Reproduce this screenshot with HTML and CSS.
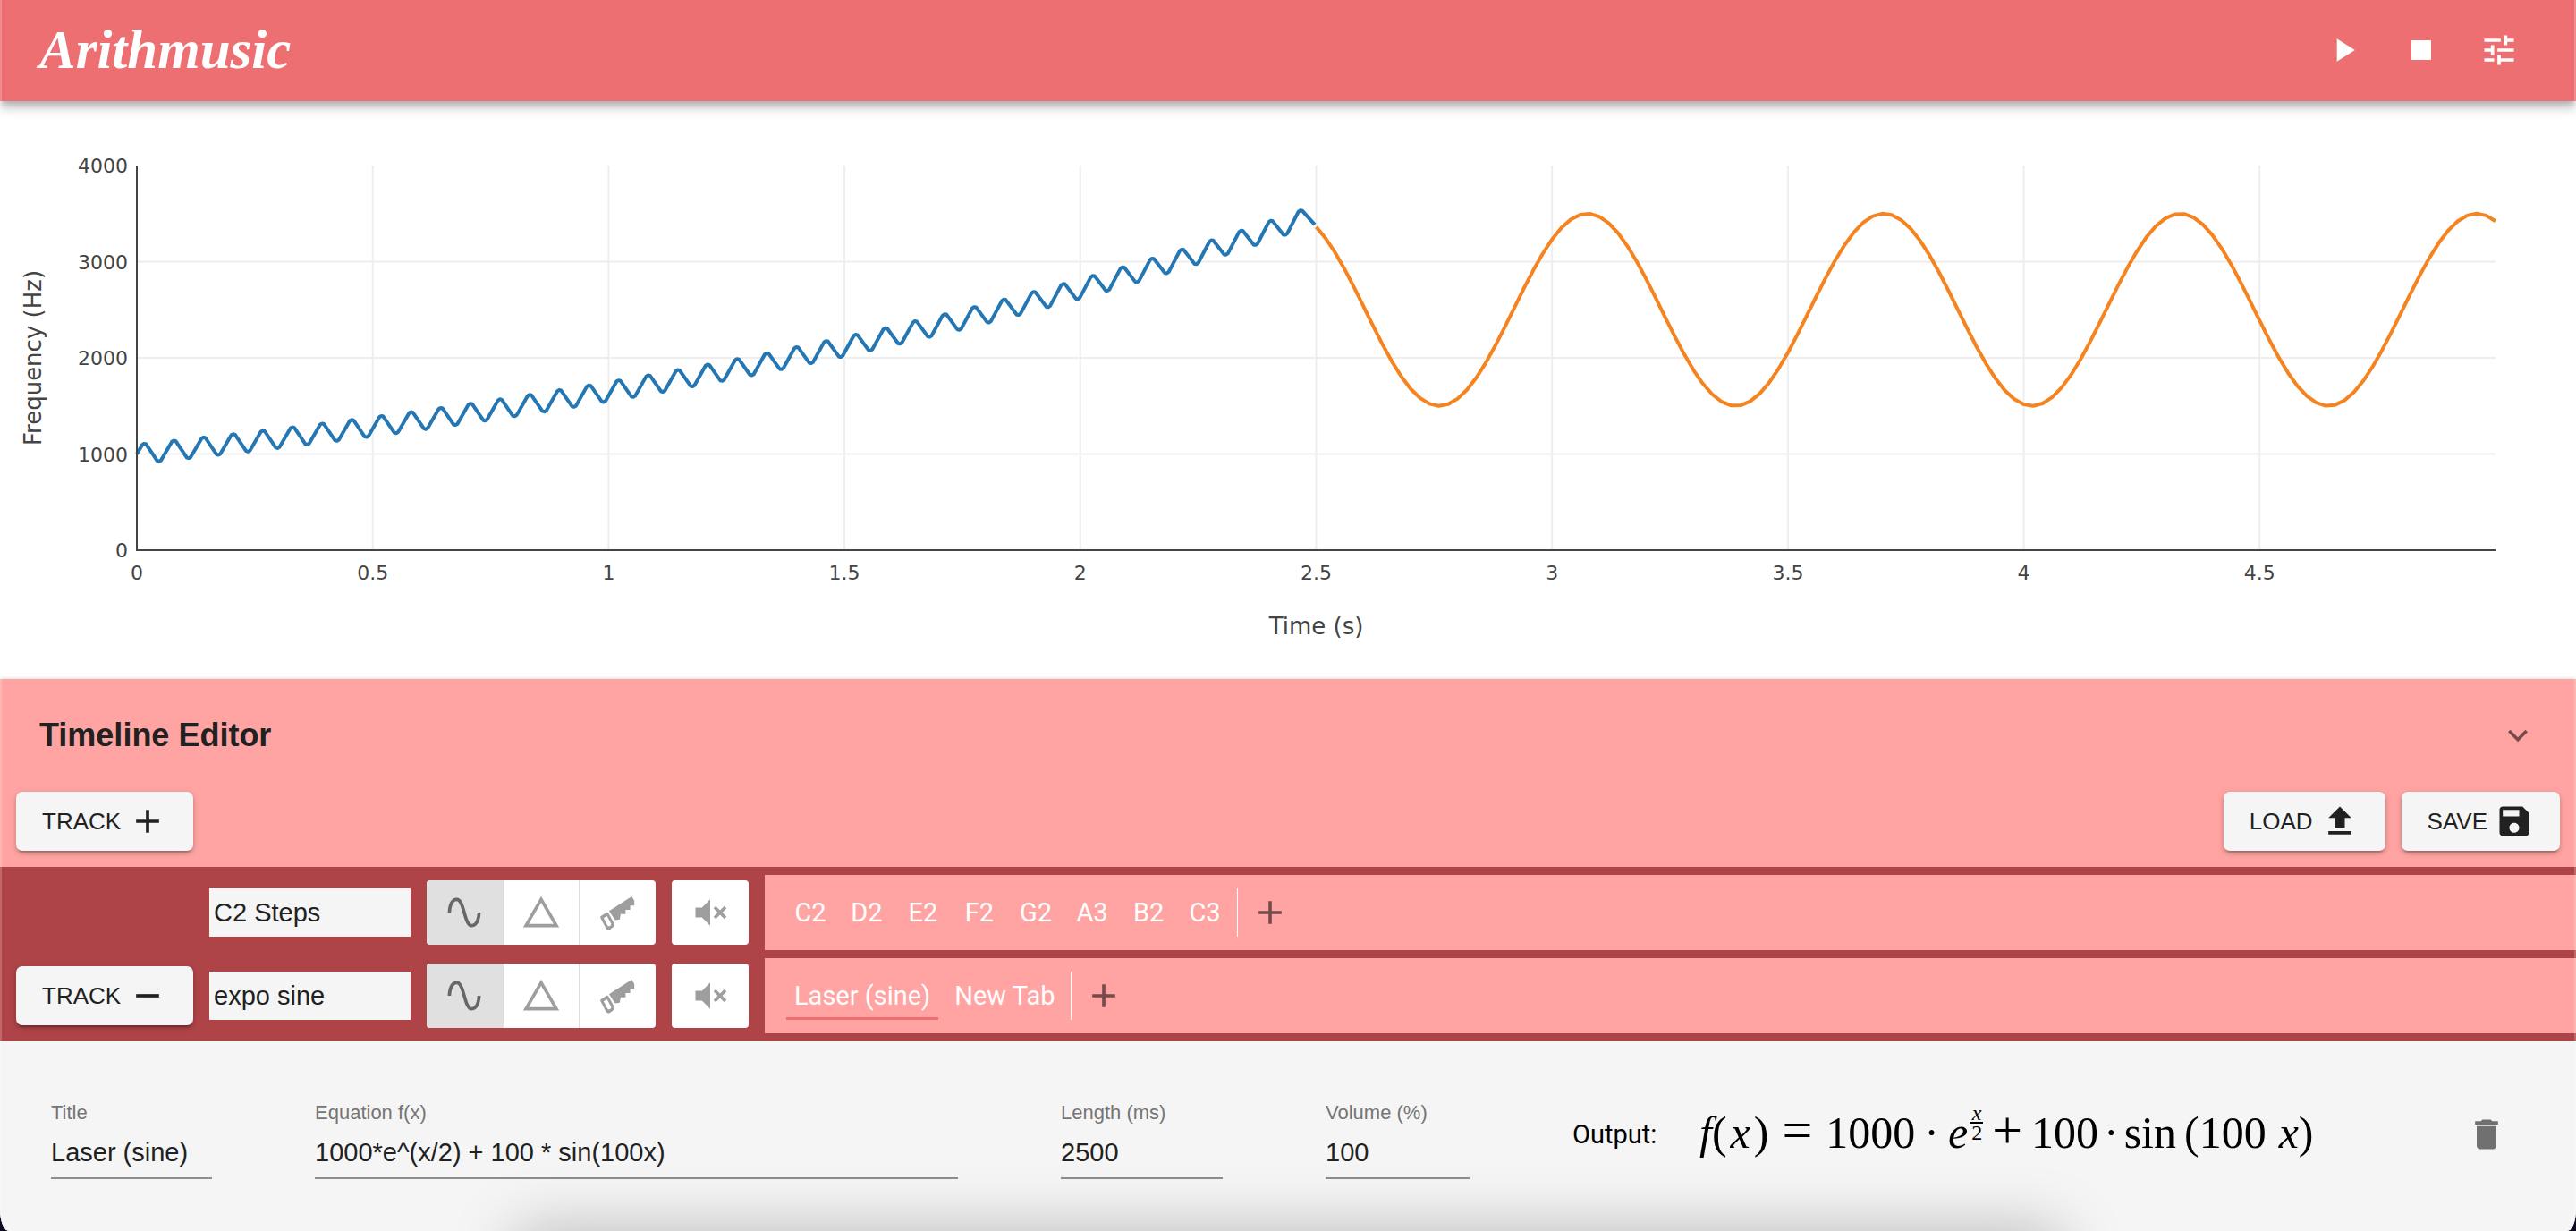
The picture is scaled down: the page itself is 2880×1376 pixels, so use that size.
FILE: index.html
```html
<!DOCTYPE html>
<html lang="en">
<head>
    <meta charset="utf-8" />
    <title>Arithmusic</title>
    <meta name="viewport" content="width=device-width, initial-scale=1">
    <link rel="stylesheet" href="styles.css">
</head>

<body>

<svg class="sprite" aria-hidden="true">
    <symbol id="i-play" viewBox="0 0 24 24"><path d="M8 5v14l11-7z"/></symbol>
    <symbol id="i-stop" viewBox="0 0 24 24"><path d="M6 6h12v12H6z"/></symbol>
    <symbol id="i-tune" viewBox="0 0 24 24"><path d="M3 17v2h6v-2H3zM3 5v2h10V5H3zm10 16v-2h8v-2h-8v-2h-2v6h2zM7 9v2H3v2h4v2h2V9H7zm14 4v-2H11v2h10zm-6-4h2V7h4V5h-4V3h-2v6z"/></symbol>
    <symbol id="i-more" viewBox="0 0 24 24"><path d="M16.59 8.59L12 13.17 7.41 8.59 6 10l6 6 6-6z"/></symbol>
    <symbol id="i-add" viewBox="0 0 24 24"><path d="M19 13h-6v6h-2v-6H5v-2h6V5h2v6h6v2z"/></symbol>
    <symbol id="i-remove" viewBox="0 0 24 24"><path d="M19 13H5v-2h14v2z"/></symbol>
    <symbol id="i-upload" viewBox="0 0 24 24"><path d="M5 20h14v-2H5v2zm0-10h4v6h6v-6h4l-7-7-7 7z"/></symbol>
    <symbol id="i-save" viewBox="0 0 24 24"><path d="M17 3H5c-1.11 0-2 .9-2 2v14c0 1.1.89 2 2 2h14c1.1 0 2-.9 2-2V7l-4-4zm-5 16c-1.66 0-3-1.34-3-3s1.34-3 3-3 3 1.34 3 3-1.34 3-3 3zm3-10H5V5h10v4z"/></symbol>
    <symbol id="i-sine" viewBox="0 0 24 24"><path d="M16.5 21c-3 0-4.19-4.24-5.45-8.72C10.14 9.04 9 5 7.5 5 4.11 5 4 11.93 4 12H2c0-.37.06-9 5.5-9 3 0 4.21 4.25 5.47 8.74C13.83 14.8 15 19 16.5 19c3.44 0 3.53-6.93 3.53-7h2c0 .37-.06 9-5.53 9z"/></symbol>
    <symbol id="i-triangle" viewBox="0 0 24 24"><path d="M12 2L1 21h22M12 6l7.53 13H4.47"/></symbol>
    <symbol id="i-saw" viewBox="0 0 24 24">
        <path d="M6.5 11.1L20.3 2.2 21.9 4.8V7.8H19.4V10.3H16.6V13H13.6L13 16.2 10.2 16.6z"/>
        <path fill-rule="evenodd" d="M1.7 14.1L4.9 12C5.4 11.7 5.8 11.8 6.1 12.3L9.6 18.5C10.1 19.5 9.8 20.4 9.1 20.9L7.1 22.3C6.1 22.9 5.2 22.6 4.6 21.7L1.4 15.6C1.1 14.9 1.1 14.5 1.7 14.1zM3.2 15.4L5.6 19.9C6.3 21.1 8.3 19.8 7.7 18.7L5.2 14.1z"/>
    </symbol>
    <symbol id="i-mute" viewBox="0 0 24 24"><path d="M3 9h4l5-5v16l-5-5H3V9m13.59 3L14 9.41 15.41 8 18 10.59 20.59 8 22 9.41 19.41 12 22 14.59 20.59 16 18 13.41 15.41 16 14 14.59 16.59 12z"/></symbol>
    <symbol id="i-delete" viewBox="0 0 24 24"><path d="M6 19c0 1.1.9 2 2 2h8c1.1 0 2-.9 2-2V7H6v12zM19 4h-3.5l-1-1h-5l-1 1H5v2h14V4z"/></symbol>
</svg>

<div class="app">
    <header class="bar">
        <h1 class="logo">Arithmusic</h1>
        <div class="bar-actions">
            <button type="button" aria-label="Play"><svg class="icon"><use href="#i-play"/></svg></button>
            <button type="button" aria-label="Stop"><svg class="icon"><use href="#i-stop"/></svg></button>
            <button type="button" aria-label="Settings"><svg class="icon"><use href="#i-tune"/></svg></button>
        </div>
    </header>

    <svg id="chart" class="chart" role="img" aria-label="Frequency over time"></svg>

    <section class="timeline">
        <div class="timeline-head">
            <h2>Timeline Editor</h2>
            <button type="button" class="fold" aria-label="Collapse"><svg class="icon"><use href="#i-more"/></svg></button>
        </div>
        <div class="tools">
            <button type="button" class="btn">TRACK<svg class="icon"><use href="#i-add"/></svg></button>
            <span class="space"></span>
            <button type="button" class="btn">LOAD<svg class="icon"><use href="#i-upload"/></svg></button>
            <button type="button" class="btn">SAVE<svg class="icon"><use href="#i-save"/></svg></button>
        </div>

        <div class="tracks">
            <div class="track">
                <div class="track-del"></div>
                <input class="track-name" type="text" value="C2 Steps" aria-label="Track name">
                <div class="waves">
                    <button type="button" class="cur" aria-label="Sine"><svg class="icon"><use href="#i-sine"/></svg></button>
                    <button type="button" aria-label="Triangle"><svg class="icon"><use href="#i-triangle"/></svg></button>
                    <button type="button" aria-label="Sawtooth"><svg class="icon"><use href="#i-saw"/></svg></button>
                </div>
                <button type="button" class="mute" aria-label="Mute"><svg class="icon"><use href="#i-mute"/></svg></button>
                <div class="tabs">
                    <button type="button" class="tab">C2</button>
                    <button type="button" class="tab">D2</button>
                    <button type="button" class="tab">E2</button>
                    <button type="button" class="tab">F2</button>
                    <button type="button" class="tab">G2</button>
                    <button type="button" class="tab">A3</button>
                    <button type="button" class="tab">B2</button>
                    <button type="button" class="tab">C3</button>
                    <button type="button" class="tab-add" aria-label="Add tab"><svg class="icon"><use href="#i-add"/></svg></button>
                </div>
            </div>
            <div class="track">
                <div class="track-del">
                    <button type="button" class="btn">TRACK<svg class="icon"><use href="#i-remove"/></svg></button>
                </div>
                <input class="track-name" type="text" value="expo sine" aria-label="Track name">
                <div class="waves">
                    <button type="button" class="cur" aria-label="Sine"><svg class="icon"><use href="#i-sine"/></svg></button>
                    <button type="button" aria-label="Triangle"><svg class="icon"><use href="#i-triangle"/></svg></button>
                    <button type="button" aria-label="Sawtooth"><svg class="icon"><use href="#i-saw"/></svg></button>
                </div>
                <button type="button" class="mute" aria-label="Mute"><svg class="icon"><use href="#i-mute"/></svg></button>
                <div class="tabs">
                    <button type="button" class="tab cur">Laser (sine)</button>
                    <button type="button" class="tab">New Tab</button>
                    <button type="button" class="tab-add" aria-label="Add tab"><svg class="icon"><use href="#i-add"/></svg></button>
                </div>
            </div>
        </div>
    </section>

    <section class="editor">
        <div class="field">
            <label for="title">Title</label>
            <input id="title" type="text" value="Laser (sine)">
        </div>
        <div class="field">
            <label for="equation">Equation f(x)</label>
            <input id="equation" type="text" value="1000*e^(x/2) + 100 * sin(100x)">
        </div>
        <div class="field">
            <label for="length">Length (ms)</label>
            <input id="length" type="text" value="2500">
        </div>
        <div class="field">
            <label for="volume">Volume (%)</label>
            <input id="volume" type="text" value="100">
        </div>
        <div class="output">
            <span class="output-label">Output:</span>
            <div class="math">
                <i>f</i><span>(</span><i class="arg">x</i><span>)</span>
                <span class="rel">=</span><span>1000</span><span class="dot">·</span><i>e</i><span class="frac"><i>x</i><span>2</span></span>
                <span class="op">+</span><span>100</span><span class="dot">·</span><span>sin</span><span class="open">(</span><span>100</span><i class="var">x</i><span>)</span>
            </div>
            <button type="button" class="delete" aria-label="Delete"><svg class="icon"><use href="#i-delete"/></svg></button>
        </div>
    </section>
</div>

<script>
    (function(){
        var chart = {
            o:document.getElementById("chart"),
            left:153,
            right:90,
            top:72,
            bottom:144,
            maxX:5,
            maxY:4000,
            x:function(t){
                return this.left + t/this.maxX*(this.w-this.left-this.right);
            },
            y:function(f){
                return this.h-this.bottom - f/this.maxY*(this.h-this.top-this.bottom);
            },
            line:function(x1,y1,x2,y2,cls){
                return '<line class="'+cls+'" x1="'+x1+'" y1="'+y1+'" x2="'+x2+'" y2="'+y2+'"/>';
            },
            text:function(x,y,cls,s){
                return '<text class="'+cls+'" x="'+x+'" y="'+y+'">'+s+'</text>';
            },
            curve:function(times,cls,fn){
                var _self = this;
                var pts = times.map(function(t){
                    return _self.x(t).toFixed(2)+","+_self.y(fn(t)).toFixed(2);
                });
                return '<polyline class="'+cls+'" points="'+pts.join(" ")+'"/>';
            },
            //evenly spaced samples
            steps:function(from,to,step){
                var a = [], n = Math.round((to-from)/step);
                for(var i=0;i<=n;i++){
                    a.push(from+i*step);
                }
                return a;
            },
            //for a fast sine: only the turning points and a sample on each side
            turns:function(from,to,freq){
                var a = [from], p, d, t;
                for(p=Math.PI/2;p/freq<to;p+=Math.PI){
                    for(d=-0.4;d<0.5;d+=0.4){
                        t = (p+d)/freq;
                        if(t < to) a.push(t);
                    }
                }
                a.push(to);
                return a;
            },
            draw:function(){
                this.w = this.o.clientWidth;
                this.h = this.o.clientHeight;
                var s = "", i, x, y,
                    x0 = this.x(0), x1 = this.x(this.maxX),
                    y0 = this.y(0), y1 = this.y(this.maxY);

                for(i=0;i<this.maxX;i+=0.5){
                    x = this.x(i);
                    if(i > 0) s += this.line(x,y1,x,y0,"grid");
                    s += this.text(x,y0+33,"tick mid",i);
                }
                for(i=0;i<=this.maxY;i+=1000){
                    y = this.y(i);
                    if(i > 0 && i < this.maxY) s += this.line(x0,y,x1,y,"grid");
                    s += this.text(x0-10,y+8,"tick end",i);
                }

                //first tab of the track, then the second
                s += this.curve(this.turns(0,2.497,100),"c1",function(t){
                    return 1000*Math.exp(t/2)+100*Math.sin(100*t);
                });
                s += this.curve(this.steps(2.5,5,0.02),"c2",function(t){
                    return 2500+1000*Math.cos(10*(t-3.075));
                });

                s += this.line(x0,y1,x0,y0+1,"axis");
                s += this.line(x0,y0,x1,y0,"axis");
                s += this.text((x0+x1)/2,y0+94,"name mid","Time (s)");
                s += '<text class="name mid" transform="translate(46 '+(y0+y1)/2+') rotate(-90)">Frequency (Hz)</text>';
                this.o.innerHTML = s;
            }
        };
        chart.draw();
        window.addEventListener("resize",function(){
            chart.draw();
        });
    })();
</script>
</body>
</html>
```
FILE: styles.css
```css
*{margin:0;padding:0;box-sizing:border-box;}
html,body{height:100%;}
body{background:#0b0a26;color:#212121;font-family:"Liberation Sans",Arial,sans-serif;}
button,input{font:inherit;color:inherit;border:none;background:none;border-radius:0;outline:none;}
button{cursor:pointer;display:flex;align-items:center;justify-content:center;}
.sprite{display:none;}
.icon{width:44px;height:44px;flex:none;fill:currentColor;display:block;}

.app{min-height:100%;display:flex;flex-direction:column;position:relative;overflow:hidden;background:#fff;border-radius:0 0 10px 10px/0 0 24px 24px;}
.app:after{content:"";position:absolute;top:0;right:0;bottom:0;left:0;border:solid rgba(255,255,255,.2);border-width:0 2px;pointer-events:none;z-index:10;}

/* top bar */
.bar{height:113px;padding:0 43px 2px 44px;display:flex;align-items:center;justify-content:space-between;background:#ed6f72;color:#fff;position:relative;z-index:2;box-shadow:0 4px 8px -2px rgba(0,0,0,.2),0 8px 10px rgba(0,0,0,.14),0 2px 20px rgba(0,0,0,.12);}
.logo{font:italic bold 61px/72px "Liberation Serif","Times New Roman",serif;}
.bar-actions{display:flex;}
.bar-actions button{width:87px;height:88px;}

/* chart */
.chart{display:block;width:100%;height:646px;}
.grid{stroke:#eee;stroke-width:2;}
.axis{stroke:#444;stroke-width:2;}
.c1,.c2{fill:none;stroke-width:4;stroke-linejoin:round;}
.c1{stroke:#2477b3;}
.c2{stroke:#f58420;}
.tick,.name{fill:#444;font-family:"DejaVu Sans",Verdana,sans-serif;}
.tick{font-size:22px;}
.name{font-size:26px;}
.mid{text-anchor:middle;}
.end{text-anchor:end;}

/* timeline */
.timeline{background:#ffa4a2;box-shadow:0 0 4px rgba(0,0,0,.2);}
.timeline-head{height:126px;padding:0 43px 0 44px;display:flex;align-items:center;justify-content:space-between;}
.timeline-head h2{font-size:36px;line-height:44px;}
.fold,.tab-add{color:rgba(0,0,0,.54);}
.tools{display:flex;gap:18px;padding:0 18px 18px;}
.space{flex:1;}
.btn{height:66px;padding:0 29px;gap:8px;font-size:26px;border-radius:7px;background:#f5f5f5;box-shadow:0 5px 2px -3px rgba(0,0,0,.2),0 3px 4px rgba(0,0,0,.14),0 2px 9px rgba(0,0,0,.12);}

.tracks{display:flex;flex-direction:column;gap:9px;padding:9px 0;background:#af4448;}
.track{display:flex;align-items:center;gap:18px;height:84px;padding-left:18px;}
.track-del{width:198px;}
.track-name{width:225px;height:54px;padding:0 5px;font-size:29px;background:#f5f5f5;}
.waves{width:256px;height:72px;display:flex;overflow:hidden;border-radius:4px;background:#fff;}
.waves button{flex:1;color:#9e9e9e;}
.waves button+button{border-left:1px solid #ddd;}
.waves .cur{background:#e0e0e0;color:#676767;}
.mute{width:86px;height:72px;border-radius:4px;background:#fff;color:#9e9e9e;}
.tabs{flex:1;align-self:stretch;display:flex;align-items:center;gap:9px;padding-left:24px;background:#ffa4a2;color:#fff;font-family:Roboto,"Liberation Sans",sans-serif;}
.tab{height:54px;min-width:54px;padding:0 9px;font-size:29px;border:solid transparent;border-width:3px 0;}
.tab.cur{border-bottom-color:#ed6f72;}
.tab-add{height:54px;padding:0 14px;border-left:1px solid #fff;}

/* editor */
.editor{flex:1;position:relative;display:grid;grid-template-columns:295fr 834fr 296fr 276fr 1122fr;align-items:start;padding:66px 0 58px 57px;background:#f5f5f5;}
.editor:after{content:"";position:absolute;left:20%;right:20%;top:100%;height:120px;box-shadow:0 0 70px rgba(0,0,0,.25);}
.field{display:flex;flex-direction:column;gap:3px;margin-right:115px;}
.field label{font-size:22px;line-height:27px;color:#757575;}
.field input{width:100%;height:58px;font-size:29px;border-bottom:2px solid #8e8e8e;}
.output{height:76px;display:flex;align-items:center;color:#000;}
.output-label{width:142px;font:29px Roboto,"Liberation Sans",sans-serif;}
.math{display:flex;align-items:baseline;margin-bottom:4px;font:50px/56px "Liberation Serif","Times New Roman",serif;}
.rel,.op{font-size:60px;line-height:50px;}
.rel{margin:0 15px;}
.op{margin:0 10px;}
.arg{margin:0 4px;}
.dot{margin:0 10px;}
.op~.dot{margin:0 6px;}
.open{margin-left:9px;}
.var{margin-left:14px;}
.frac{display:inline-flex;flex-direction:column;align-self:flex-start;margin:-4px 0 0 3px;width:14px;font-size:24px;line-height:20px;text-align:center;}
.frac i{border-bottom:2px solid #000;}
.delete{margin:0 78px 0 auto;color:#707070;}
```
